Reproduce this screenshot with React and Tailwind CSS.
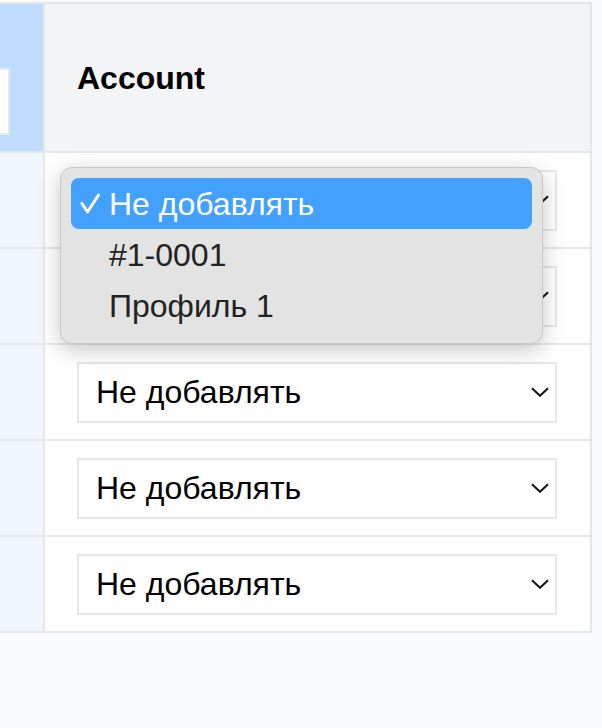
const FONT = { fontFamily: '"Liberation Sans", Arial, sans-serif' };

function Chevron() {
  return (
    <svg width="18" height="10" viewBox="0 0 18 10" fill="none" className="shrink-0">
      <path d="M1 1.2 L9 8.8 L17 1.2" stroke="#111" strokeWidth="2" />
    </svg>
  );
}

function FakeSelect({ value = "Не добавлять" }) {
  return (
    <div className="flex h-[61px] w-full items-center justify-between border-2 border-[#e5e7eb] bg-white pl-[17px] pr-[6px]">
      <span className="text-[32px] leading-none text-black">{value}</span>
      <Chevron />
    </div>
  );
}

function Menu() {
  const items = ["Не добавлять", "#1-0001", "Профиль 1"];
  return (
    <div className="absolute left-[15px] top-[14px] z-10 w-[483px] rounded-[12px] border border-[#c9c9c9] bg-[#e3e3e3] px-[10px] pt-[10px] pb-[12px] shadow-[0_6px_22px_rgba(0,0,0,0.22)]">
      {items.map((item, i) => (
        <div
          key={item}
          className={
            i === 0
              ? "flex h-[51px] items-center rounded-[8px] bg-[#44a0fd] text-white"
              : "flex h-[51px] items-center text-[#222]"
          }
        >
          <span className="flex w-[38px] justify-end pr-[9px]">
            {i === 0 && (
              <svg width="20" height="22" viewBox="0 0 20 22" fill="none">
                <path d="M2 10.5 L7.5 19 L18.5 2" stroke="#fff" strokeWidth="3" strokeLinecap="round" strokeLinejoin="round" />
              </svg>
            )}
          </span>
          <span className="text-[32px] leading-none">{item}</span>
        </div>
      ))}
    </div>
  );
}

export default function App() {
  const rows = [0, 1, 2, 3, 4];
  return (
    <div className="h-[728px] w-full overflow-hidden bg-[#f9fafb] pt-[2px]" style={FONT}>
      <div className="w-[592px] border-t-2 border-r-2 border-[#e5e7eb]">
        <div className="flex h-[149px] border-b-2 border-[#e5e7eb]">
          <div className="flex w-[43px] shrink-0 items-start justify-end overflow-hidden bg-[#bfdbfe] pt-[64px] pr-[33px]">
            <div className="h-[67px] w-[200px] shrink-0 border-2 border-[#e5e7eb] bg-white" />
          </div>
          <div className="flex flex-1 items-center border-l-2 border-[#e5e7eb] bg-[#f3f4f6] pl-[32px] pr-[33px]">
            <span className="text-[32px] font-bold text-black">Account</span>
          </div>
        </div>
        {rows.map((r) => (
          <div key={r} className="flex h-[96px] border-b-2 border-[#e5e7eb] bg-white">
            <div className="w-[43px] shrink-0 bg-[#eff6ff]" />
            <div className="relative flex flex-1 items-center border-l-2 border-[#e5e7eb] pl-[32px] pr-[33px]">
              <FakeSelect />
              {r === 0 && <Menu />}
            </div>
          </div>
        ))}
      </div>
    </div>
  );
}
